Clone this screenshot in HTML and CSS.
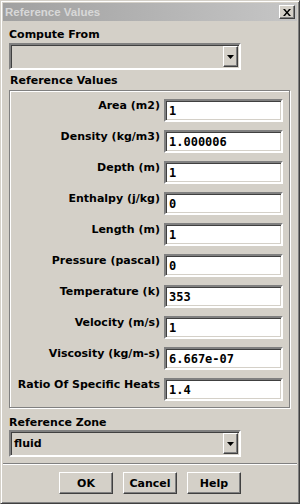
FILE: index.html
```html
<!DOCTYPE html>
<html lang="en">
<head>
    <meta charset="UTF-8">
    <meta name="viewport" content="width=device-width, initial-scale=1.0">
    <link rel="stylesheet" href="styles.css">
    <title>Reference Values</title>
</head>
<body>
    <div class="window">
        <div class="titlebar">
            <span class="title">Reference Values</span>
            <span class="close-btn">
                <svg width="8" height="7" viewBox="0 0 8 7">
                    <path d="M0 0h2l2 2.5L6 0h2L5 3.5 8 7H6L4 4.5 2 7H0l3-3.5z" fill="#000"/>
                </svg>
            </span>
        </div>
        <div class="content">
            <div class="caption">Compute From</div>
            <div class="combo">
                <span class="combo-text"></span>
                <span class="combo-btn">
                    <svg width="7" height="4" viewBox="0 0 7 4"><path d="M0 0h7L3.5 4z" fill="#000"/></svg>
                </span>
            </div>

            <div class="caption group-caption">Reference Values</div>
            <div class="group">
                <div class="row"><label>Area (m2)</label><input class="field" type="text" value="1"></div>
                <div class="row"><label>Density (kg/m3)</label><input class="field" type="text" value="1.000006"></div>
                <div class="row"><label>Depth (m)</label><input class="field" type="text" value="1"></div>
                <div class="row"><label>Enthalpy (j/kg)</label><input class="field" type="text" value="0"></div>
                <div class="row"><label>Length (m)</label><input class="field" type="text" value="1"></div>
                <div class="row"><label>Pressure (pascal)</label><input class="field" type="text" value="0"></div>
                <div class="row"><label>Temperature (k)</label><input class="field" type="text" value="353"></div>
                <div class="row"><label>Velocity (m/s)</label><input class="field" type="text" value="1"></div>
                <div class="row"><label>Viscosity (kg/m-s)</label><input class="field" type="text" value="6.667e-07"></div>
                <div class="row"><label>Ratio Of Specific Heats</label><input class="field" type="text" value="1.4"></div>
            </div>

            <div class="caption zone-caption">Reference Zone</div>
            <div class="combo">
                <span class="combo-text">fluid</span>
                <span class="combo-btn">
                    <svg width="7" height="4" viewBox="0 0 7 4"><path d="M0 0h7L3.5 4z" fill="#000"/></svg>
                </span>
            </div>
        </div>

        <div class="separator"></div>

        <div class="buttons">
            <button class="btn">OK</button>
            <button class="btn">Cancel</button>
            <button class="btn">Help</button>
        </div>
    </div>
</body>
</html>
```

FILE: styles.css
```css
body {
    margin: 0;
    font-family: 'DejaVu Sans', sans-serif;
    font-size: 11px;
    font-weight: bold;
    color: #000;
    background-color: #d4d0c8;
}

.window {
    width: 300px;
    height: 504px;
    box-sizing: border-box;
    background-color: #d4d0c8;
    border: 1px solid;
    border-color: #d4d0c8 #404040 #404040 #d4d0c8;
    box-shadow: inset 1px 1px #fff, inset -1px -1px #808080;
    padding: 2px;
}

.titlebar {
    height: 18px;
    display: flex;
    justify-content: space-between;
    align-items: center;
    padding: 0 2px 0 2px;
    background: linear-gradient(to right, #a0a0a0, #c6c6c6);
}

.title {
    font-family: 'Liberation Sans', Arial, sans-serif;
    font-size: 11.5px;
    font-weight: bold;
    color: #d8d8d8;
}

.close-btn {
    width: 16px;
    height: 14px;
    box-sizing: border-box;
    display: flex;
    justify-content: center;
    align-items: center;
    background-color: #d4d0c8;
    border: 1px solid;
    border-color: #fff #404040 #404040 #fff;
    box-shadow: inset -1px -1px #808080;
}

.content {
    padding: 0 7px 0 6px;
}

.caption {
    line-height: 14px;
    margin-top: 7px;
    margin-bottom: 1px;
}

.group-caption {
    margin-top: 4px;
    margin-bottom: 2px;
    padding-left: 1px;
}

.zone-caption {
    margin-top: 8px;
    margin-bottom: 0;
}

.combo {
    width: 232px;
    height: 27px;
    box-sizing: border-box;
    display: flex;
    align-items: stretch;
    border: 2px solid;
    border-color: #808080 #fff #fff #808080;
    box-shadow: inset 1px 1px #404040, inset -1px -1px #d4d0c8;
    padding: 1px 1px 1px 2px;
    background-color: #d4d0c8;
}

.combo-text {
    flex: 1;
    display: flex;
    align-items: center;
    padding-left: 1px;
}

.combo-btn {
    width: 15px;
    box-sizing: border-box;
    display: flex;
    justify-content: center;
    align-items: center;
    border: 1px solid;
    border-color: #fff #404040 #404040 #fff;
    box-shadow: inset -1px -1px #808080;
}

.group {
    border: 1px solid #808080;
    box-shadow: inset 1px 1px #fff, 1px 1px #fff;
    padding: 8px 6px 6px 6px;
    display: flex;
    flex-direction: column;
    gap: 8px;
}

.row {
    display: flex;
    justify-content: flex-end;
    align-items: flex-start;
    gap: 4px;
}

.row label {
    line-height: 14px;
    white-space: nowrap;
}

.field {
    width: 119px;
    height: 23px;
    box-sizing: border-box;
    margin: 0;
    padding: 0 3px;
    border: 2px solid;
    border-color: #808080 #fff #fff #808080;
    box-shadow: inset 1px 1px #404040, inset -1px -1px #d4d0c8;
    background-color: #fff;
    font-family: 'DejaVu Sans Mono', monospace;
    font-size: 12px;
    font-weight: bold;
    color: #000;
    outline: none;
}

.separator {
    margin: 6px 0 0 0;
    height: 1px;
    background-color: #808080;
    border-bottom: 1px solid #fff;
}

.buttons {
    display: flex;
    justify-content: center;
    gap: 10px;
    margin-top: 7px;
}

.btn {
    width: 54px;
    height: 22px;
    box-sizing: border-box;
    margin: 0;
    padding: 0;
    font-family: 'DejaVu Sans', sans-serif;
    font-size: 11px;
    font-weight: bold;
    color: #000;
    background-color: #d4d0c8;
    border: 1px solid;
    border-color: #fff #404040 #404040 #fff;
    box-shadow: inset -1px -1px #808080;
    cursor: pointer;
}
```
